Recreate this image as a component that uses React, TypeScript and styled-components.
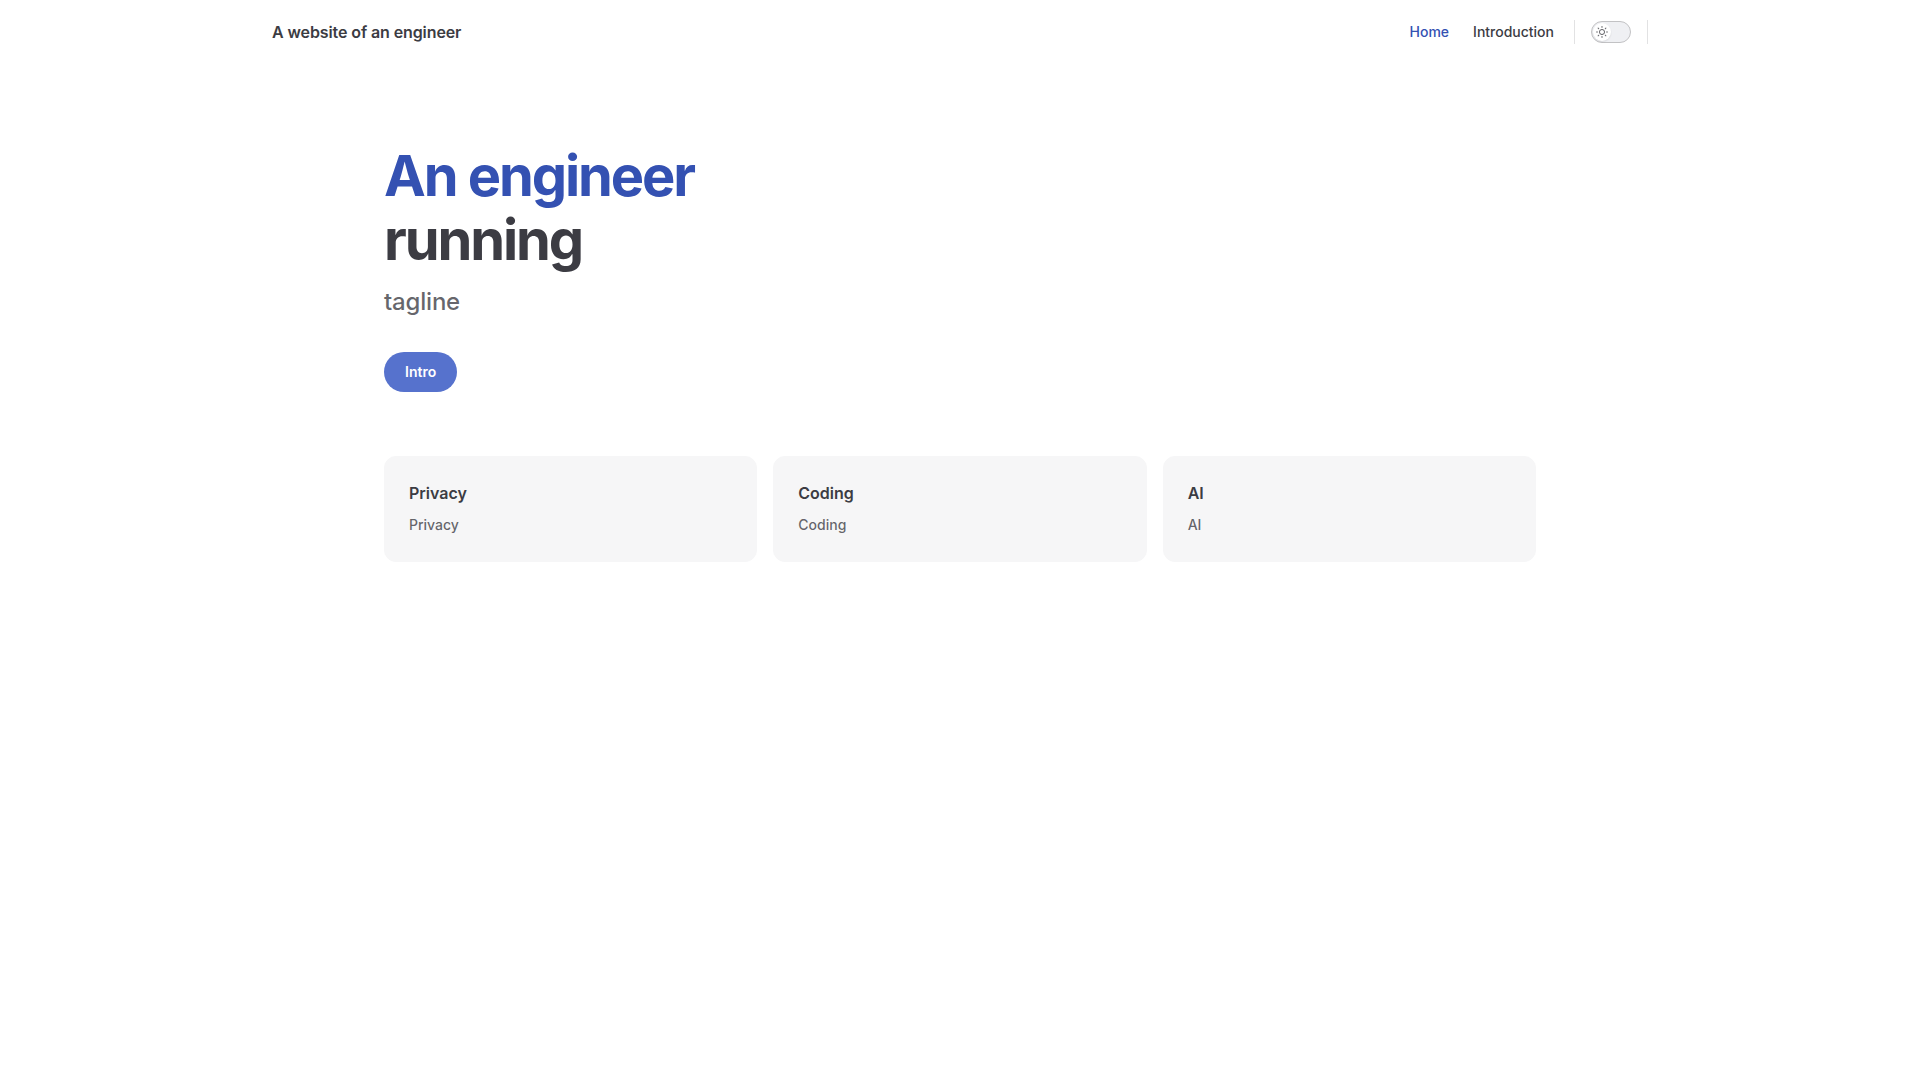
import styled, { createGlobalStyle } from "styled-components";

const GlobalStyle = createGlobalStyle`
  body {
    margin: 0;
    background: #ffffff;
    font-family: Inter, "Noto Sans", "Liberation Sans", sans-serif;
    color: #3c3c43;
    -webkit-font-smoothing: antialiased;
  }
  * {
    box-sizing: border-box;
  }
`;

const NavBar = styled.header`
  height: 64px;
  padding: 0 32px;
`;

const NavInner = styled.div`
  display: flex;
  justify-content: space-between;
  align-items: center;
  max-width: 1376px;
  height: 64px;
  margin: 0 auto;
`;

const SiteTitle = styled.a`
  font-size: 16px;
  font-weight: 600;
  letter-spacing: -0.1px;
  color: #3c3c43;
  text-decoration: none;
  line-height: 64px;
`;

const NavRight = styled.div`
  display: flex;
  align-items: center;
  height: 64px;
`;

const NavMenu = styled.nav`
  display: flex;
`;

const NavLink = styled.a<{ $active?: boolean }>`
  padding: 0 12px;
  line-height: 64px;
  font-size: 14px;
  font-weight: 500;
  color: ${(p) => (p.$active ? "#3451b2" : "#3c3c43")};
  text-decoration: none;
`;

const Divider = styled.span<{ $left?: number; $right?: number }>`
  width: 1px;
  height: 24px;
  background: #e2e2e3;
  margin-left: ${(p) => p.$left ?? 0}px;
  margin-right: ${(p) => p.$right ?? 0}px;
`;

const Switch = styled.button`
  position: relative;
  width: 40px;
  height: 22px;
  padding: 0;
  margin-right: 16px;
  border-radius: 11px;
  border: 1px solid #c2c2c4;
  background: rgba(142, 150, 170, 0.14);
  cursor: pointer;
`;

const Knob = styled.span`
  position: absolute;
  top: 1px;
  left: 1px;
  width: 18px;
  height: 18px;
  border-radius: 50%;
  background: #ffffff;
  box-shadow: 0 1px 2px rgba(0, 0, 0, 0.04), 0 1px 2px rgba(0, 0, 0, 0.06);
  display: flex;
  align-items: center;
  justify-content: center;

  svg {
    width: 12px;
    height: 12px;
    fill: rgba(60, 60, 67, 0.78);
  }
`;

const Hero = styled.section`
  padding: 80px 64px 64px;
`;

const HeroInner = styled.div`
  max-width: 1152px;
  margin: 0 auto;
`;

const HeroLine = styled.h1<{ $brand?: boolean }>`
  margin: 0;
  font-size: 56px;
  line-height: 64px;
  font-weight: 700;
  letter-spacing: -2.1px;
  color: ${(p) => (p.$brand ? "#3451b2" : "#3c3c43")};
`;

const Tagline = styled.p`
  margin: 0;
  padding-top: 12px;
  font-size: 24px;
  line-height: 36px;
  font-weight: 500;
  letter-spacing: -0.2px;
  color: rgba(60, 60, 67, 0.78);
`;

const Actions = styled.div`
  display: flex;
  padding-top: 32px;
`;

const ActionButton = styled.a`
  display: inline-block;
  border: 1px solid transparent;
  border-radius: 20px;
  padding: 0 20px;
  line-height: 38px;
  font-size: 14px;
  font-weight: 600;
  color: #ffffff;
  background: #5672cd;
  text-decoration: none;
`;

const Features = styled.section`
  padding: 0 64px;
`;

const FeatureGrid = styled.div`
  max-width: 1152px;
  margin: 0 auto;
  display: grid;
  grid-template-columns: repeat(3, 1fr);
  gap: 16px;
`;

const Card = styled.article`
  border: 1px solid #f6f6f7;
  border-radius: 12px;
  background: #f6f6f7;
  padding: 24px;
`;

const CardTitle = styled.h2`
  margin: 0;
  font-size: 16px;
  line-height: 24px;
  font-weight: 600;
  color: #3c3c43;
`;

const CardDetails = styled.p`
  margin: 0;
  padding-top: 8px;
  font-size: 14px;
  line-height: 24px;
  font-weight: 500;
  color: rgba(60, 60, 67, 0.78);
`;

const SunIcon = () => (
  <svg viewBox="0 0 24 24" aria-hidden="true">
    <path d="M12,18c-3.3,0-6-2.7-6-6s2.7-6,6-6s6,2.7,6,6S15.3,18,12,18zM12,8c-2.2,0-4,1.8-4,4c0,2.2,1.8,4,4,4c2.2,0,4-1.8,4-4C16,9.8,14.2,8,12,8z" />
    <path d="M12,4c-0.6,0-1-0.4-1-1V1c0-0.6,0.4-1,1-1s1,0.4,1,1v2C13,3.6,12.6,4,12,4z" />
    <path d="M12,24c-0.6,0-1-0.4-1-1v-2c0-0.6,0.4-1,1-1s1,0.4,1,1v2C13,23.6,12.6,24,12,24z" />
    <path d="M5.6,6.6c-0.3,0-0.5-0.1-0.7-0.3L3.5,4.9c-0.4-0.4-0.4-1,0-1.4s1-0.4,1.4,0l1.4,1.4c0.4,0.4,0.4,1,0,1.4C6.2,6.5,5.9,6.6,5.6,6.6z" />
    <path d="M19.8,20.8c-0.3,0-0.5-0.1-0.7-0.3l-1.4-1.4c-0.4-0.4-0.4-1,0-1.4s1-0.4,1.4,0l1.4,1.4c0.4,0.4,0.4,1,0,1.4C20.3,20.7,20,20.8,19.8,20.8z" />
    <path d="M3,13H1c-0.6,0-1-0.4-1-1s0.4-1,1-1h2c0.6,0,1,0.4,1,1S3.6,13,3,13z" />
    <path d="M23,13h-2c-0.6,0-1-0.4-1-1s0.4-1,1-1h2c0.6,0,1,0.4,1,1S23.6,13,23,13z" />
    <path d="M4.2,20.8c-0.3,0-0.5-0.1-0.7-0.3c-0.4-0.4-0.4-1,0-1.4l1.4-1.4c0.4-0.4,1-0.4,1.4,0s0.4,1,0,1.4l-1.4,1.4C4.7,20.7,4.5,20.8,4.2,20.8z" />
    <path d="M18.4,6.6c-0.3,0-0.5-0.1-0.7-0.3c-0.4-0.4-0.4-1,0-1.4l1.4-1.4c0.4-0.4,1-0.4,1.4,0s0.4,1,0,1.4l-1.4,1.4C18.9,6.5,18.7,6.6,18.4,6.6z" />
  </svg>
);

const features = [
  { title: "Privacy", details: "Privacy" },
  { title: "Coding", details: "Coding" },
  { title: "AI", details: "AI" },
];

export default function App() {
  return (
    <>
      <GlobalStyle />
      <NavBar>
        <NavInner>
          <SiteTitle href="#">A website of an engineer</SiteTitle>
          <NavRight>
            <NavMenu>
              <NavLink $active href="#">
                Home
              </NavLink>
              <NavLink href="#">Introduction</NavLink>
            </NavMenu>
            <Divider $left={8} $right={16} />
            <Switch aria-label="toggle dark mode">
              <Knob>
                <SunIcon />
              </Knob>
            </Switch>
            <Divider />
          </NavRight>
        </NavInner>
      </NavBar>
      <Hero>
        <HeroInner>
          <HeroLine $brand>An engineer</HeroLine>
          <HeroLine>running</HeroLine>
          <Tagline>tagline</Tagline>
          <Actions>
            <ActionButton href="#">Intro</ActionButton>
          </Actions>
        </HeroInner>
      </Hero>
      <Features>
        <FeatureGrid>
          {features.map((f) => (
            <Card key={f.title}>
              <CardTitle>{f.title}</CardTitle>
              <CardDetails>{f.details}</CardDetails>
            </Card>
          ))}
        </FeatureGrid>
      </Features>
    </>
  );
}
